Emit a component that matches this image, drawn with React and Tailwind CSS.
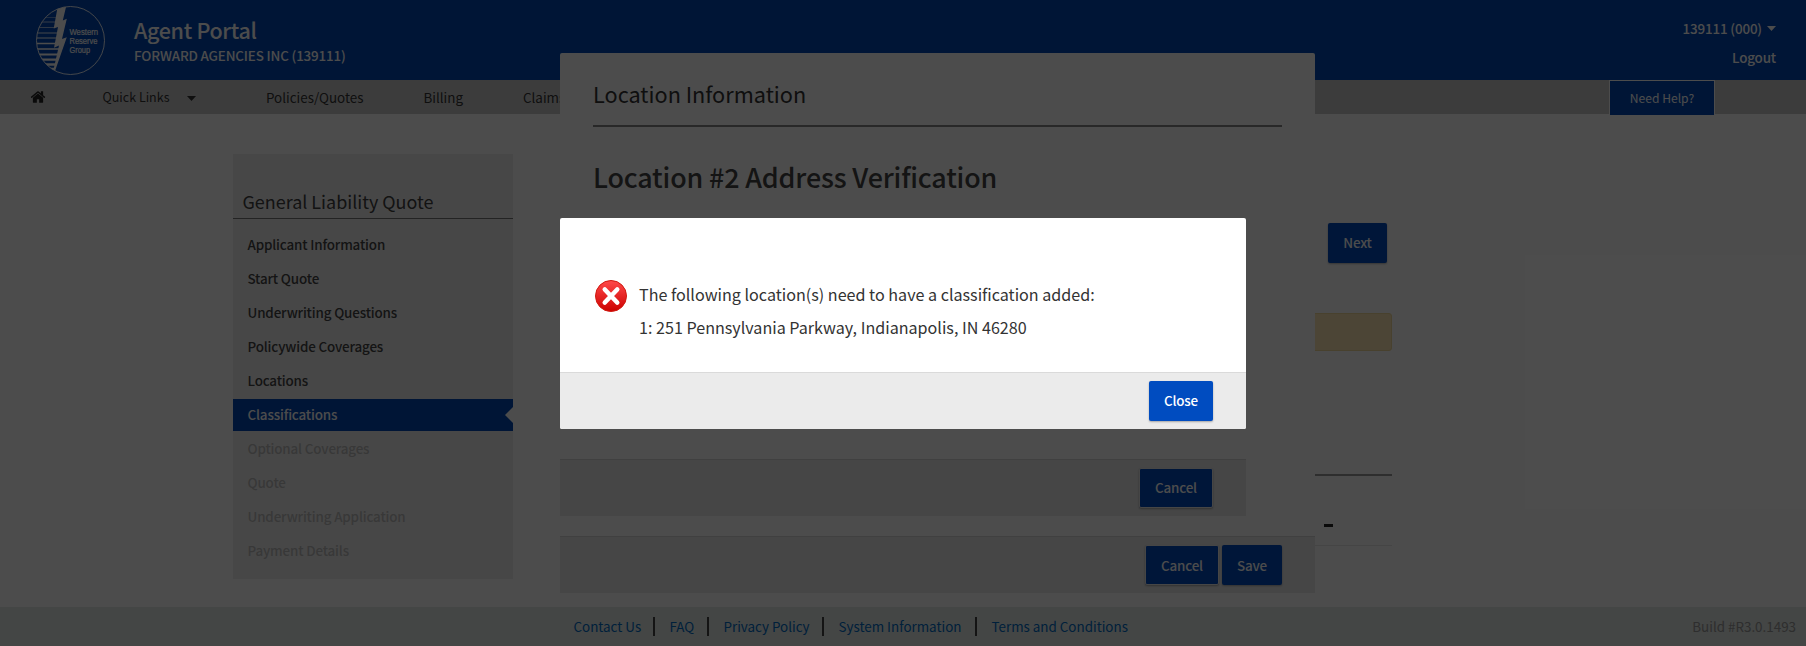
const STEPS = [
  'Applicant Information',
  'Start Quote',
  'Underwriting Questions',
  'Policywide Coverages',
  'Locations',
  'Classifications',
  'Optional Coverages',
  'Quote',
  'Underwriting Application',
  'Payment Details',
];
const ACTIVE = 5;

const FOOTER_LINKS = [
  { label: 'Contact Us', w: 'w-[79px]' },
  { label: 'FAQ', w: 'w-[37px]' },
  { label: 'Privacy Policy', w: 'w-[98px]' },
  { label: 'System Information', w: 'w-[136px]' },
  { label: 'Terms and Conditions', w: 'w-[140px]' },
];

function Logo() {
  return (
    <svg className="h-[72px] w-[72px]" viewBox="0 0 72 72">
      <defs>
        <clipPath id="disc"><circle cx="35.5" cy="35.5" r="34" /></clipPath>
      </defs>
      <circle cx="35.5" cy="35.5" r="34" fill="none" stroke="#fff" strokeWidth="0.9" />
      <g clipPath="url(#disc)">
        <g stroke="#fff">
          <path d="M0 12.5H21" strokeWidth="0.4" />
          <path d="M0 17H21" strokeWidth="0.7" />
          <path d="M0 22.5H20" strokeWidth="0.6" />
          <path d="M0 28H23" strokeWidth="0.9" />
          <path d="M0 33H22" strokeWidth="1.1" />
          <path d="M0 38.5H20" strokeWidth="1.3" />
          <path d="M0 44H24" strokeWidth="1.6" />
          <path d="M0 49.5H23" strokeWidth="1.8" />
          <path d="M0 54.7H22" strokeWidth="2.2" />
          <path d="M0 59.5H21" strokeWidth="2.4" />
          <path d="M0 64H20" strokeWidth="2.4" />
        </g>
        <path d="M23 0H31.5L27.8 15.5L31.8 13.8L27 34L31.8 32.2L20 66L18.5 64.5L24 40.5L19 42.8L23 22L18.7 23.5Z" fill="#fff" />
      </g>
      <g fill="#fff" stroke="#fff" strokeWidth="0.2" fontFamily="'Liberation Sans', sans-serif" fontSize="8.4">
        <text x="34.5" y="30" textLength="28.5" lengthAdjust="spacingAndGlyphs">Western</text>
        <text x="34.5" y="39" textLength="28" lengthAdjust="spacingAndGlyphs">Reserve</text>
        <text x="34.5" y="48" textLength="20.5" lengthAdjust="spacingAndGlyphs">Group</text>
      </g>
    </svg>
  );
}

function HomeIcon({ className }) {
  return (
    <svg className={className} viewBox="0 0 1792 1792" fill="currentColor">
      <path d="M1472 992v480q0 26-19 45t-45 19h-384v-384h-256v384h-384q-26 0-45-19t-19-45v-480q0-1 .5-3t.5-3l575-474 575 474q1 2 1 6zm223-69l-62 74q-8 9-21 11h-3q-13 0-21-7l-692-577-692 577q-12 8-24 7-13-2-21-11l-62-74q-8-10-7-23.5t11-21.5l719-599q32-26 76-26t76 26l244 204v-195q0-14 9-23t23-9h192q14 0 23 9t9 23v408l219 182q10 8 11 21.5t-7 23.5z" />
    </svg>
  );
}

function Caret({ className }) {
  return (
    <svg className={className} viewBox="0 0 10 5" preserveAspectRatio="none">
      <path d="M0 0H10L5 5Z" fill="currentColor" />
    </svg>
  );
}

function ErrorIcon() {
  return (
    <svg className="h-8 w-8 shrink-0" viewBox="0 0 32 32">
      <defs>
        <linearGradient id="red" x1="0" y1="0" x2="0" y2="1">
          <stop offset="0" stopColor="#ff4a4a" />
          <stop offset="1" stopColor="#cc0000" />
        </linearGradient>
      </defs>
      <circle cx="16" cy="16" r="15.5" fill="url(#red)" stroke="#d01a10" />
      <path d="M9.8 9.5L22.2 22.5M22.2 9.5L9.8 22.5" stroke="#fff" strokeWidth="4.6" strokeLinecap="round" />
    </svg>
  );
}

function Button({ children, className = '' }) {
  return (
    <button className={`flex items-center justify-center rounded-[2px] bg-[#004cc0] text-[13.4px] font-medium leading-5 tracking-[-0.18px] text-white shadow-[0_1px_2px_rgba(0,0,0,0.3)] ${className}`}>
      {children}
    </button>
  );
}

export default function App() {
  return (
    <div className="relative h-[646px] w-[1806px] overflow-hidden bg-white font-['Noto_Sans_CJK_SC','Noto_Sans',sans-serif] text-[#333]">
      <header className="flex h-20 bg-[#0047b5] text-white">
        <div className="pl-[35px] pt-[5px]"><Logo /></div>
        <div className="ml-[27px] pt-4">
          <h1 className="text-[21.5px] font-medium leading-[28px] tracking-[-0.33px]">Agent Portal</h1>
          <p className="text-[13.4px] font-medium leading-[22px] tracking-[-0.16px]">FORWARD AGENCIES INC (139111)</p>
        </div>
        <div className="ml-auto flex flex-col items-end pr-[30px] pt-[14px] text-[13.4px] font-medium leading-[29px] tracking-[-0.15px]">
          <div className="flex items-center">139111 (000)<Caret className="ml-[5px] h-[5px] w-[9px]" /></div>
          <div>Logout</div>
        </div>
      </header>

      <nav className="flex h-[34px] items-center bg-[#cacaca] text-[13.4px] leading-5">
        <HomeIcon className="ml-[30px] h-4 w-4 text-[#222]" />
        <div className="ml-[56.5px] flex w-[163.5px] items-center pb-px text-[12.5px]">Quick Links<Caret className="ml-[18px] mt-[3px] h-[5px] w-[9px]" /></div>
        <div className="w-[157.5px]">Policies/Quotes</div>
        <div className="w-[99.5px]">Billing</div>
        <div>Claims</div>
        <div className="mb-px ml-auto mr-[91px] mt-[2px] flex h-[35px] w-[106px] items-center justify-center border-x border-t border-white bg-[#0047b5] text-[12.1px] text-white">Need Help?</div>
      </nav>

      <main className="flex h-[493px] items-start pl-[233px] pt-10">
        <aside className="h-[425px] w-[280px] bg-[#efefef]">
          <h2 className="h-[65px] border-b border-[#777] pl-[9.5px] pt-[34px] text-[17.95px] leading-[26px] text-[#404040]">General Liability Quote</h2>
          <ul className="pt-[10px] text-[13.4px] font-medium leading-[30px] tracking-[-0.15px] text-[#444]">
            {STEPS.map((step, i) => (
              <li
                key={step}
                className={`mb-[2px] flex h-8 items-start pl-[14.5px] ${i === ACTIVE ? 'bg-[#0047b5] text-white' : i > ACTIVE ? 'text-[#bcbcbc]' : ''}`}
              >
                {step}
                {i === ACTIVE && (
                  <svg className="ml-auto h-4 w-2 self-center" viewBox="0 0 8 16"><path d="M8 0V16L0 8Z" fill="#fff" /></svg>
                )}
              </li>
            ))}
          </ul>
        </aside>
        <section className="ml-[782px] w-[97px] pt-[69px]">
          <Button className="ml-[33px] h-10 w-[59px] pb-[2px]">Next</Button>
          <div className="mt-[50px] h-[38px] rounded-[3px] border border-[#f0d99a] bg-[#ffe7b5]" />
          <div className="mt-[123px] h-0.5 bg-[#999]" />
          <div className="flex h-[70px] items-center justify-start border-b border-[#e6e6e6] pl-[29px] pt-[30px]">
            <div className="h-[3px] w-[9px] bg-[#222]" />
          </div>
        </section>
      </main>

      <footer className="flex h-[39px] items-center bg-[#e4eae7] pl-[573.5px] pr-[10px] text-[13.4px] leading-[18px] text-[#006cc5]">
        {FOOTER_LINKS.map(({ label, w }, i) => (
          <div key={label} className={`box-content h-[19px] whitespace-nowrap ${w} ${i < 4 ? 'mr-[15px] border-r-2 border-[#444]' : ''}`}>{label}</div>
        ))}
        <div className="ml-auto h-[19px] text-[#999]">Build #R3.0.1493</div>
      </footer>

      <div className="absolute left-[560px] top-[53px] flex h-[540px] w-[755px] flex-col rounded-[2px] bg-white">
        <h2 className="mx-[33px] h-[74px] border-b-2 border-[#888] pt-[26px] text-[21.7px] leading-[30px]">Location Information</h2>
        <h3 className="mx-[33px] pt-[30px] text-[26.86px] font-medium leading-[40px] tracking-[-0.15px] text-[#444]">Location #2 Address Verification</h3>
        <div className="mt-auto flex h-[57px] w-[686px] items-center justify-end border-t border-[#d8d8d8] bg-[#ebebeb] pr-[33px]">
          <Button className="h-10 w-[74px] border border-[#ebebeb] pb-[2px]">Cancel</Button>
        </div>
        <div className="mt-5 flex h-[57px] items-center justify-end gap-[3px] border-t border-[#d8d8d8] bg-[#ebebeb] pr-[33px]">
          <Button className="h-10 w-[74px] border border-[#ebebeb]">Cancel</Button>
          <Button className="h-10 w-[60px]">Save</Button>
        </div>
      </div>

      <div className="absolute inset-0 bg-black/70" />

      <div className="absolute left-[560px] top-[218px] flex h-[211px] w-[686px] flex-col overflow-hidden rounded-[2px] bg-white">
        <div className="flex flex-1 items-start pl-[35px] pt-[62px]">
          <ErrorIcon />
          <div className="-mt-[2px] ml-[12px] text-[16.12px] leading-[33px]">
            <p>The following location(s) need to have a classification added:</p>
            <p>1: 251 Pennsylvania Parkway, Indianapolis, IN 46280</p>
          </div>
        </div>
        <div className="flex h-[57px] items-center justify-end border-t border-[#dadada] bg-[#ebebeb] pr-[33px]">
          <Button className="h-10 w-16 pb-[2px]">Close</Button>
        </div>
      </div>
    </div>
  );
}
